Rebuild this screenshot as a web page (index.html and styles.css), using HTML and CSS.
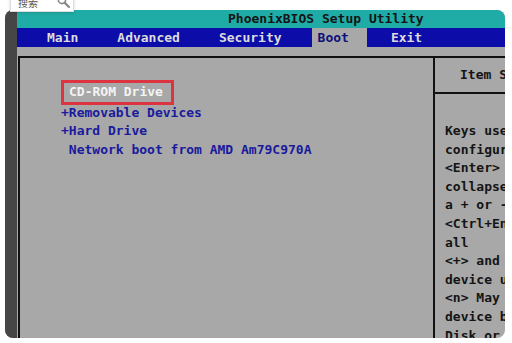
FILE: index.html
```html
<!DOCTYPE html>
<html lang="en">
<head>
  <meta charset="UTF-8" />
  <meta name="viewport" content="width=device-width, initial-scale=1.0" />
  <title>PhoenixBIOS Setup Utility</title>
  <link rel="stylesheet" href="styles.css">
</head>
<body>
  <div class="search-tip">
    <span class="search-text">搜索</span>
    <svg class="search-icon" width="14" height="14" viewBox="0 0 14 14">
      <circle cx="5" cy="4" r="3.6" fill="none" stroke="#8a8a8a" stroke-width="1.6" />
      <line x1="7.6" y1="6.6" x2="12" y2="11" stroke="#8a8a8a" stroke-width="2.2" stroke-linecap="round" />
    </svg>
  </div>

  <div class="screen">
    <div class="bezel"></div>
    <div class="bios">
      <div class="title-bar">PhoenixBIOS Setup Utility</div>
      <nav class="menu-bar">
        <span class="menu-item m-main">Main</span>
        <span class="menu-item m-advanced">Advanced</span>
        <span class="menu-item m-security">Security</span>
        <span class="menu-item m-boot active">Boot</span>
        <span class="menu-item m-exit">Exit</span>
      </nav>
      <div class="work">
        <div class="frame">
          <div class="boot-list">
            <div class="boot-item selected">CD-ROM Drive</div>
            <div class="boot-item">+Removable Devices</div>
            <div class="boot-item">+Hard Drive</div>
            <div class="boot-item"> Network boot from AMD Am79C970A</div>
          </div>
          <div class="help">
            <div class="help-title">Item Specific Help</div>
            <div class="help-text">
              <div>Keys used to view or</div>
              <div>configure devices:</div>
              <div>&lt;Enter&gt; expands or</div>
              <div>collapses devices with</div>
              <div>a + or -</div>
              <div>&lt;Ctrl+Enter&gt; expands</div>
              <div>all</div>
              <div>&lt;+&gt; and &lt;-&gt; moves the</div>
              <div>device up or down.</div>
              <div>&lt;n&gt; May move removable</div>
              <div>device between Hard</div>
              <div>Disk or Removable Disk</div>
            </div>
          </div>
        </div>
      </div>
    </div>
  </div>
</body>
</html>
```

FILE: styles.css
```css
body {
  margin: 0;
  background: #fff;
  width: 512px;
  height: 343px;
  overflow: hidden;
  position: relative;
  font-family: "DejaVu Sans Mono", "Liberation Mono", monospace;
}
.search-tip {
  position: absolute;
  left: 10px;
  top: -12px;
  width: 62px;
  height: 22px;
  background: #fff;
  border: 1px solid #ddd;
  box-shadow: 0 1px 3px rgba(0,0,0,0.15);
  z-index: 2;
  display: flex;
  align-items: center;
}
.search-text {
  font-family: "Noto Sans CJK SC", sans-serif;
  font-size: 10px;
  color: #555;
  margin-left: 7px;
  margin-top: 4px;
  white-space: nowrap;
}
.search-icon {
  margin-left: 19px;
  margin-top: 6px;
}
.screen {
  position: absolute;
  left: 5px;
  top: 10px;
  width: 500px;
  height: 328px;
  border-radius: 8px;
  overflow: hidden;
  display: flex;
  background: #a8a8a8;
}
.bezel {
  width: 12px;
  flex: none;
  background: #464646;
}
.bios {
  flex: 1;
  display: flex;
  flex-direction: column;
  font-size: 13px;
  font-weight: bold;
  min-width: 0;
}
.title-bar {
  height: 18px;
  line-height: 18px;
  background: #20aca6;
  color: #141414;
  padding-left: 211px;
  white-space: nowrap;
}
.menu-bar {
  height: 19px;
  line-height: 19px;
  background: #0c0ca8;
  color: #dcdcdc;
  display: flex;
  white-space: nowrap;
}
.m-main { margin-left: 30px; }
.m-advanced { margin-left: 39px; }
.m-security { margin-left: 39px; }
.m-boot { margin-left: 30px; padding: 0 18px 0 6px; }
.m-exit { margin-left: 24px; }
.menu-item.active {
  background: #a8a8a8;
  color: #10107a;
}
.work {
  flex: 1;
  padding: 9px 0 0 1px;
  display: flex;
  min-width: 0;
}
.frame {
  flex: 1;
  border-top: 2px solid #111;
  border-left: 2px solid #111;
  display: flex;
  min-width: 0;
}
.boot-list {
  width: 415px;
  flex: none;
  border-right: 2px solid #111;
  padding: 22px 0 0 41px;
  box-sizing: border-box;
  color: #1a1a9c;
  line-height: 18.6px;
}
.boot-item {
  white-space: pre;
}
.boot-item.selected {
  display: inline-block;
  color: #f4f4f4;
  border: 3px solid #dc3440;
  padding: 0 8px 0 5px;
  margin-bottom: -1px;
}
.help {
  flex: 1;
  min-width: 0;
  overflow: hidden;
  color: #141414;
  white-space: nowrap;
}
.help-title {
  height: 34px;
  line-height: 34px;
  padding-left: 25px;
  border-bottom: 2px solid #111;
}
.help-text {
  padding: 28px 0 0 10px;
  line-height: 18.6px;
}
```
